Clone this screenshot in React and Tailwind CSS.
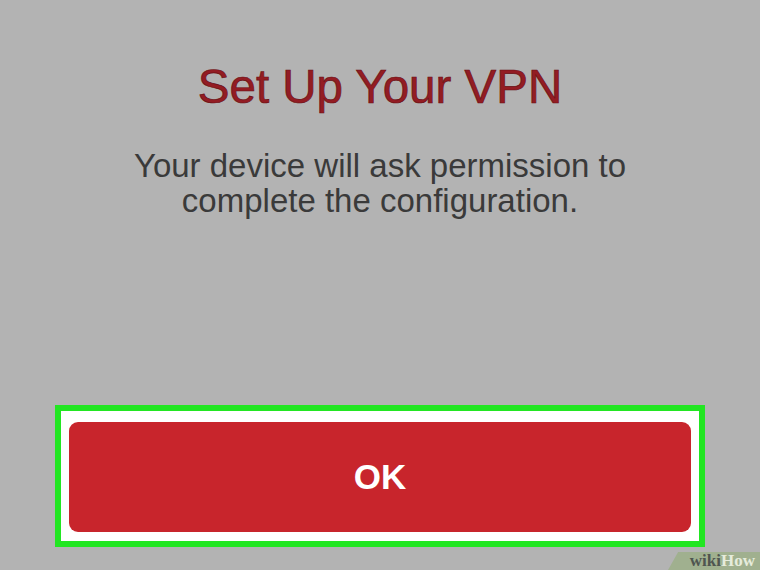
const App = () => {
    return (
        <div
            className="relative w-[760px] h-[570px] overflow-hidden bg-[#b3b3b3] flex flex-col items-center"
            style={{ fontFamily: '"Liberation Sans", Arial, sans-serif' }}
        >
            {/* Title */}
            <h1 className="mt-[63px] text-[47.5px] leading-[47px] text-[#931c23] [-webkit-text-stroke:0.7px_#6a1015]">
                Set Up Your VPN
            </h1>

            {/* Message */}
            <p className="mt-[38px] text-[33px] leading-[35px] text-[#3a3a3a] text-center">
                Your device will ask permission to
                <br />
                complete the configuration.
            </p>

            {/* Highlighted button */}
            <div className="mt-[187px] w-[650px] h-[142px] border-[6px] border-[#22e622] bg-white pt-[11px] pb-[9px] px-2 flex">
                <button className="flex-1 rounded-[9px] bg-[#c8252c] text-white font-bold text-[35px] flex items-center justify-center">
                    OK
                </button>
            </div>

            {/* Watermark */}
            <div
                className="absolute right-0 bottom-0 w-[92px] h-[18px] bg-[#a0b08f] flex items-end justify-end pr-[5px] pb-[3px] [clip-path:polygon(11%_0,100%_0,100%_100%,0_100%)]"
                style={{ fontFamily: '"Liberation Serif", "Times New Roman", serif' }}
            >
                <span className="text-[17px] font-bold leading-[13px] text-[#4f5550]">wiki</span>
                <span className="text-[17px] font-bold leading-[13px] text-[#e6ecdc]">How</span>
            </div>
        </div>
    );
};

export default App;
